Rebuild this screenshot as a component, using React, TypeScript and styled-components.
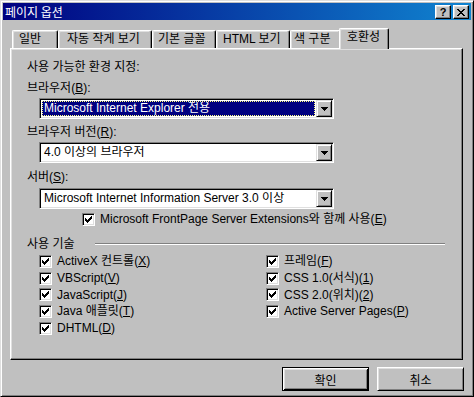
import React from "react";
import styled, { createGlobalStyle } from "styled-components";

const GlobalStyle = createGlobalStyle`
  html, body {
    margin: 0;
    padding: 0;
    background: #c0c0c0;
  }
  body {
    font-family: "Liberation Sans", "Noto Sans CJK KR", sans-serif;
    font-size: 12px;
    color: #000;
  }
  * {
    box-sizing: border-box;
  }
  u {
    text-decoration: underline;
    text-underline-offset: 1px;
  }
`;

const TABS = [
  { label: "일반", width: 46, pad: 6 },
  { label: "자동 작게 보기", width: 94, pad: 8 },
  { label: "기본 글꼴", width: 64, pad: 5 },
  { label: "HTML 보기", width: 74, pad: 6 },
  { label: "색 구분", width: 51, pad: 3 },
  { label: "호환성", width: 50, pad: 7, active: true },
];

const TECH: { label: string; key: string; after?: string }[] = [
  { label: "ActiveX 컨트롤(", key: "X", after: ")" },
  { label: "VBScript(", key: "V", after: ")" },
  { label: "JavaScript(", key: "J", after: ")" },
  { label: "Java 애플릿(", key: "T", after: ")" },
  { label: "DHTML(", key: "D", after: ")" },
  { label: "프레임(", key: "F", after: ")" },
  { label: "CSS 1.0(서식)(", key: "1", after: ")" },
  { label: "CSS 2.0(위치)(", key: "2", after: ")" },
  { label: "Active Server Pages(", key: "P", after: ")" },
];

const CheckMark = () => (
  <svg width="7" height="7" viewBox="0 0 7 7" shapeRendering="crispEdges">
    <path
      fill="#000"
      d="M6 0h1v1h-1z M5 1h2v1h-2z M0 2h1v1H0z M4 2h3v1H4z M0 3h2v1H0z M3 3h3v1H3z M0 4h5v1H0z M1 5h3v1H1z M2 6h1v1H2z"
    />
  </svg>
);

const DownArrow = () => (
  <svg width="7" height="4" viewBox="0 0 7 4" shapeRendering="crispEdges">
    <path fill="#000" d="M0 0h7v1H0z M1 1h5v1H1z M2 2h3v1H2z M3 3h1v1H3z" />
  </svg>
);

const CloseGlyph = () => (
  <svg width="8" height="7" viewBox="0 0 8 7" shapeRendering="crispEdges">
    <path
      fill="#000"
      d="M0 0h2v1H0z M6 0h2v1H6z M1 1h2v1H1z M5 1h2v1H5z M2 2h4v1H2z M3 3h2v1H3z M2 4h4v1H2z M1 5h2v1H1z M5 5h2v1H5z M0 6h2v1H0z M6 6h2v1H6z"
    />
  </svg>
);

const Checkbox = () => (
  <CheckBoxBox>
    <CheckMark />
  </CheckBoxBox>
);

const Combo = ({ value, focused }: { value: string; focused?: boolean }) => (
  <ComboBox>
    <ComboValue $focused={focused}>{value}</ComboValue>
    <DropButton>
      <DownArrow />
    </DropButton>
  </ComboBox>
);

const App = () => {
  return (
    <>
      <GlobalStyle />
      <Window>
        <TitleBar>
          <TitleText>페이지 옵션</TitleText>
          <TitleButtons>
            <TitleButton>?</TitleButton>
            <TitleButton>
              <CloseGlyph />
            </TitleButton>
          </TitleButtons>
        </TitleBar>

        <Body>
          <TabStrip>
            {TABS.map((t) => (
              <Tab key={t.label} $width={t.width} $pad={t.pad} $active={t.active}>
                {t.label}
              </Tab>
            ))}
          </TabStrip>

          <Panel>
            <Label>사용 가능한 환경 지정:</Label>
            <Label $top={5}>
              브라우저(<u>B</u>):
            </Label>
            <Field $top={2}>
              <Combo value="Microsoft Internet Explorer 전용" focused />
            </Field>
            <Label $top={5}>
              브라우저 버전(<u>R</u>):
            </Label>
            <Field $top={2}>
              <Combo value="4.0 이상의 브라우저" />
            </Field>
            <Label $top={6}>
              서버(<u>S</u>):
            </Label>
            <Field $top={3}>
              <Combo value="Microsoft Internet Information Server 3.0 이상" />
            </Field>
            <CheckRow $indent={55} $top={2}>
              <Checkbox />
              <span>
                Microsoft FrontPage Server Extensions와 함께 사용(<u>E</u>)
              </span>
            </CheckRow>

            <GroupHeader>
              <span>사용 기술</span>
              <GroupLine />
            </GroupHeader>
            <TechGrid>
              {TECH.map((t) => (
                <CheckRow key={t.key}>
                  <Checkbox />
                  <span>
                    {t.label}
                    <u>{t.key}</u>
                    {t.after}
                  </span>
                </CheckRow>
              ))}
            </TechGrid>
          </Panel>

          <ButtonRow>
            <PushButton $default>확인</PushButton>
            <PushButton>취소</PushButton>
          </ButtonRow>
        </Body>
      </Window>
    </>
  );
};

const Window = styled.div`
  width: 474px;
  height: 397px;
  background: #c0c0c0;
  border: 1px solid;
  border-color: #dfdfdf #000 #000 #dfdfdf;
  box-shadow: inset 1px 1px #fff, inset -1px -1px #808080;
  padding: 2px;
  display: flex;
  flex-direction: column;
`;

const TitleBar = styled.div`
  height: 17px;
  flex: 0 0 17px;
  display: flex;
  align-items: center;
  justify-content: space-between;
  padding: 0 2px 0 2px;
  background: linear-gradient(90deg, #000080, #1084d0);
`;

const TitleText = styled.span`
  color: #fff;
  font-size: 12px;
  line-height: 16px;
  font-family: "Noto Sans CJK KR", sans-serif;
`;

const TitleButtons = styled.div`
  display: flex;
  gap: 2px;
`;

const TitleButton = styled.div`
  width: 16px;
  height: 14px;
  display: flex;
  align-items: center;
  justify-content: center;
  background: #c0c0c0;
  border: 1px solid;
  border-color: #fff #000 #000 #fff;
  box-shadow: inset -1px -1px #808080, inset 1px 1px #dfdfdf;
  font: bold 11px/12px "Liberation Sans", sans-serif;
  padding-top: 1px;
`;

const Body = styled.div`
  flex: 1;
  display: flex;
  flex-direction: column;
  padding: 8px 8px 0 7px;
`;

const TabStrip = styled.div`
  height: 20px;
  display: flex;
  align-items: flex-end;
  padding-left: 2px;
  position: relative;
  z-index: 1;
`;

const Tab = styled.div<{ $width: number; $pad: number; $active?: boolean }>`
  width: ${(p) => p.$width}px;
  height: ${(p) => (p.$active ? 21 : 18)}px;
  margin: ${(p) => (p.$active ? "0 -2px -1px -2px" : "0")};
  padding-left: ${(p) => p.$pad}px;
  line-height: 16px;
  white-space: nowrap;
  background: #c0c0c0;
  border-top: 1px solid #fff;
  border-left: 1px solid #fff;
  border-right: 1px solid #000;
  border-radius: 2px 2px 0 0;
  box-shadow: inset -1px 0 #808080, inset 1px 1px #dfdfdf;
  position: relative;
  z-index: ${(p) => (p.$active ? 2 : 1)};
`;

const Panel = styled.div`
  height: 312px;
  flex: 0 0 312px;
  display: flex;
  flex-direction: column;
  align-items: flex-start;
  border: 1px solid;
  border-color: #fff #000 #000 #fff;
  box-shadow: inset -1px -1px #808080, inset 1px 1px #dfdfdf;
  padding: 10px 17px 0 16px;
`;

const Label = styled.div<{ $top?: number }>`
  height: 16px;
  line-height: 16px;
  margin-top: ${(p) => p.$top ?? 0}px;
  white-space: nowrap;
`;

const Field = styled.div<{ $top?: number }>`
  margin-top: ${(p) => p.$top ?? 0}px;
  padding-left: 12px;
`;

const ComboBox = styled.div`
  width: 295px;
  height: 21px;
  display: flex;
  background: #fff;
  border: 1px solid;
  border-color: #808080 #fff #fff #808080;
  box-shadow: inset 1px 1px #000, inset -1px -1px #dfdfdf;
  padding: 1px;
`;

const ComboValue = styled.div<{ $focused?: boolean }>`
  flex: 1;
  margin: 1px;
  padding-left: 1px;
  line-height: 13px;
  white-space: nowrap;
  overflow: hidden;
  background: ${(p) => (p.$focused ? "#000080" : "transparent")};
  color: ${(p) => (p.$focused ? "#fff" : "#000")};
  border: 1px ${(p) => (p.$focused ? "dotted #ffff80" : "solid transparent")};
`;

const DropButton = styled.div`
  width: 16px;
  height: 17px;
  flex: 0 0 16px;
  display: flex;
  align-items: center;
  justify-content: center;
  background: #c0c0c0;
  border: 1px solid;
  border-color: #dfdfdf #000 #000 #dfdfdf;
  box-shadow: inset 1px 1px #fff, inset -1px -1px #808080;
`;

const CheckRow = styled.div<{ $indent?: number; $top?: number }>`
  display: flex;
  align-items: center;
  gap: 5px;
  height: 16px;
  line-height: 16px;
  white-space: nowrap;
  margin-top: ${(p) => p.$top ?? 0}px;
  padding-left: ${(p) => p.$indent ?? 0}px;
`;

const CheckBoxBox = styled.span`
  width: 13px;
  height: 13px;
  flex: 0 0 13px;
  display: inline-flex;
  align-items: center;
  justify-content: center;
  background: #fff;
  border: 1px solid;
  border-color: #808080 #fff #fff #808080;
  box-shadow: inset 1px 1px #000, inset -1px -1px #dfdfdf;
`;

const GroupHeader = styled.div`
  align-self: stretch;
  display: flex;
  align-items: center;
  gap: 20px;
  height: 16px;
  line-height: 16px;
  margin-top: 9px;
`;

const GroupLine = styled.div`
  flex: 1;
  height: 2px;
  border-top: 1px solid #808080;
  border-bottom: 1px solid #fff;
`;

const TechGrid = styled.div`
  display: grid;
  grid-auto-flow: column;
  grid-template-rows: repeat(5, 16.7px);
  grid-template-columns: 227px auto;
  align-items: center;
  margin-top: 1px;
  padding-left: 12px;
`;

const ButtonRow = styled.div`
  display: flex;
  justify-content: flex-end;
  gap: 8px;
  margin-top: 7px;
  margin-right: -1px;
`;

const PushButton = styled.div<{ $default?: boolean }>`
  width: 87px;
  height: 24px;
  display: flex;
  align-items: center;
  justify-content: center;
  background: #c0c0c0;
  border: 1px solid;
  border-color: ${(p) => (p.$default ? "#000" : "#fff #000 #000 #fff")};
  box-shadow: ${(p) =>
    p.$default
      ? "inset 1px 1px #fff, inset -1px -1px #000, inset 2px 2px #dfdfdf, inset -2px -2px #808080"
      : "inset 1px 1px #dfdfdf, inset -1px -1px #808080"};
`;

export default App;
